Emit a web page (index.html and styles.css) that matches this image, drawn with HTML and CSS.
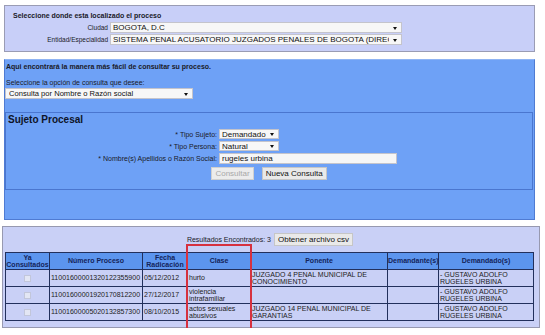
FILE: index.html
```html
<!DOCTYPE html>
<html>
<head>
<meta charset="utf-8">
<link rel="stylesheet" href="styles.css">
</head>
<body>

<div class="ubicacion">
	<p class="titulo">Seleccione donde esta localizado el proceso</p>
	<div class="campos">
		<label>Ciudad</label>
		<span class="combo"><select class="ancho"><option>BOGOTA, D.C</option></select></span>
		<label>Entidad/Especialidad</label>
		<span class="combo"><select class="ancho"><option>SISTEMA PENAL ACUSATORIO JUZGADOS PENALES DE BOGOTA (DIRECCION SECCIONAL)</option></select></span>
	</div>
</div>

<div class="consulta">
	<p class="aviso">Aqui encontrará la manera más fácil de consultar su proceso.</p>
	<p class="opcion">Seleccione la opción de consulta que desee:</p>
	<span class="combo"><select class="tipo-consulta"><option>Consulta por Nombre o Razón social</option></select></span>

	<div class="sujeto">
		<h2>Sujeto Procesal</h2>
		<div class="formulario">
			<label>* Tipo Sujeto:</label>
			<span class="combo"><select class="corto"><option>Demandado</option></select></span>
			<label>* Tipo Persona:</label>
			<span class="combo"><select class="corto"><option>Natural</option></select></span>
			<label>* Nombre(s) Apellidos o Razón Social:</label>
			<input type="text" class="nombre" value="rugeles urbina">
		</div>
		<div class="botones">
			<button disabled>Consultar</button>
			<button>Nueva Consulta</button>
		</div>
	</div>
</div>

<div class="resultados">
	<div class="encontrados">
		<span>Resultados Encontrados: 3</span>
		<button>Obtener archivo csv</button>
	</div>
	<table class="tabla">
		<thead>
			<tr>
				<th class="c-ya">Ya Consultados</th>
				<th class="c-num">Número Proceso</th>
				<th class="c-fecha">Fecha Radicación</th>
				<th class="c-clase">Clase</th>
				<th class="c-ponente">Ponente</th>
				<th class="c-dte">Demandante(s)</th>
				<th class="c-ddo">Demandado(s)</th>
			</tr>
		</thead>
		<tbody>
			<tr>
				<td class="check"><span class="caja"></span></td>
				<td>11001600001320122355900</td>
				<td>05/12/2012</td>
				<td>hurto</td>
				<td>JUZGADO 4 PENAL MUNICIPAL DE CONOCIMIENTO</td>
				<td></td>
				<td>- GUSTAVO ADOLFO RUGELES URBINA</td>
			</tr>
			<tr>
				<td class="check"><span class="caja"></span></td>
				<td>11001600001920170812200</td>
				<td>27/12/2017</td>
				<td>violencia intrafamiliar</td>
				<td></td>
				<td></td>
				<td>- GUSTAVO ADOLFO RUGELES URBINA</td>
			</tr>
			<tr>
				<td class="check"><span class="caja"></span></td>
				<td>11001600005020132857300</td>
				<td>08/10/2015</td>
				<td>actos sexuales abusivos</td>
				<td>JUZGADO 14 PENAL MUNICIPAL DE GARANTIAS</td>
				<td></td>
				<td>- GUSTAVO ADOLFO RUGELES URBINA</td>
			</tr>
		</tbody>
	</table>
	<div class="marca"></div>
</div>

</body>
</html>
```

FILE: styles.css
```css
* { margin: 0; box-sizing: border-box }

body {
	margin: 0;
	font-family: "Liberation Sans", Arial, sans-serif;
	font-size: 7px;
	color: #1a1a28;
	background: #fff;
}

/* selects con flecha propia */
.combo { position: relative; display: inline-block; line-height: 0 }
.combo::after {
	content: "";
	position: absolute;
	right: 5px;
	top: 50%;
	margin-top: -1px;
	border-left: 2px solid transparent;
	border-right: 2px solid transparent;
	border-top: 3px solid #111;
}

select, input {
	-webkit-appearance: none;
	appearance: none;
	font-family: "Liberation Sans", Arial, sans-serif;
	font-size: 8px;
	line-height: 9px;
	color: #111;
	background: #f7f7f7;
	border: 1px solid #c4c4cc;
	border-radius: 0;
	padding: 0 12px 0 2px;
	height: 11px;
	outline: none;
}

button {
	font-family: "Liberation Sans", Arial, sans-serif;
	font-size: 8px;
	color: #111;
	background: #e9e9e9;
	border: 1px solid #c6c6c6;
	border-radius: 0;
	padding: 0 3px;
	height: 13px;
	line-height: 11px;
}
button:disabled { color: #a8a8a8; background: #ececec; border-color: #d0d0d0 }

/* panel ubicacion */
.ubicacion {
	margin: 5px 0 0 4px;
	width: 531px;
	height: 47px;
	background: #c8cff8;
	border: 1px solid #9a9cb4;
	padding: 6px 8px 0 8px;
}
.titulo { font-weight: bold; line-height: 8px }
.campos {
	display: grid;
	grid-template-columns: 95px 292px;
	column-gap: 2px;
	row-gap: 1px;
	align-items: center;
	margin-top: 2px;
}
.campos label { text-align: right; font-size: 6.5px }
.ancho { width: 292px }

/* panel consulta */
.consulta {
	margin: 7px 0 0 4px;
	width: 531px;
	height: 161px;
	background: #6ea1f6;
	border: 1px solid #4f7bd2;
	border-top-color: #8fb4f4;
	padding: 2px 0 0 0;
}
.aviso { font-weight: bold; line-height: 9px; padding-left: 1px }
.opcion { line-height: 9px; margin-top: 7px; padding-left: 1px }
.consulta > .combo { margin-top: 1px }
.tipo-consulta { width: 188px; font-size: 7.6px; padding-left: 3px }

.sujeto {
	margin-top: 13px;
	width: 528px;
	height: 78px;
	border: 1px solid #4a76cf;
	padding: 1px 0 0 2px;
}
.sujeto h2 { font-size: 10px; line-height: 12px; font-weight: bold; color: #0e1428 }

.formulario {
	display: grid;
	grid-template-columns: 209px auto;
	column-gap: 2px;
	row-gap: 2px;
	align-items: center;
	justify-items: start;
	margin-top: 3px;
}
.formulario label { justify-self: end }
.formulario select { height: 10px }
.corto { width: 60px; padding-right: 9px }
.nombre { width: 178px; padding: 0 2px; background: #f6f6f6 }

.botones {
	display: flex;
	justify-content: center;
	gap: 8px;
	margin-top: 3px;
	padding-right: 2px;
}

/* resultados */
.resultados {
	position: relative;
	margin: 6px 0 0 2px;
	width: 538px;
	height: 102px;
	background: #c9d0f6;
	border: 1px solid #9799b0;
	padding: 6px 0 0 2px;
}
.encontrados {
	display: flex;
	justify-content: center;
	align-items: center;
	gap: 3px;
	padding-right: 4px;
}

.tabla {
	margin-top: 6px;
	width: 528px;
	border-collapse: collapse;
	table-layout: fixed;
	border: 1px solid #22305c;
}
.tabla th, .tabla td {
	border: 1px solid #22305c;
	line-height: 7.5px;
	padding: 0 1px;
	vertical-align: middle;
}
.tabla th {
	background: #5c95ee;
	color: #14245a;
	font-weight: bold;
	text-align: center;
	height: 17px;
	padding: 0;
}
.tabla td {
	background: #c9d0f6;
	color: #222;
	height: 17px;
	text-align: left;
}
.c-ya { width: 44px }
.c-num { width: 93px }
.c-fecha { width: 45px }
.c-clase { width: 63px }
.c-ponente { width: 137px }
.c-dte { width: 51px }
.c-ddo { width: 95px }

.tabla td.check { text-align: center }
.caja {
	display: inline-block;
	width: 7px;
	height: 7px;
	background: #e3e6f4;
	border: 1px solid #c2c6da;
	vertical-align: middle;
}

/* recuadro rojo sobre la columna Clase */
.marca {
	position: absolute;
	left: 183px;
	top: 17px;
	width: 66px;
	height: 89px;
	border: 2px solid #d6313f;
}
```
